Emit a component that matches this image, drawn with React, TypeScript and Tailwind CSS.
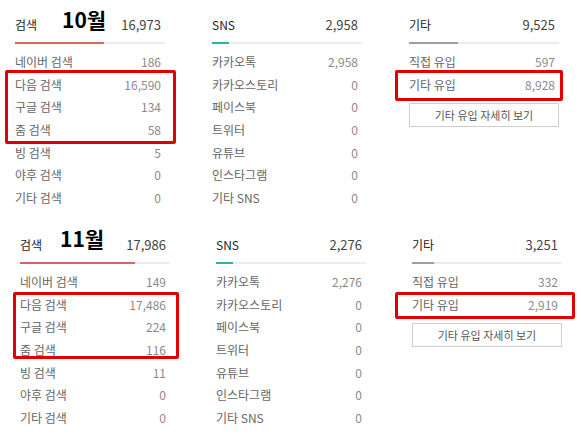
import React from "react";

type Row = [string, string];

const FONT = { fontFamily: '"Noto Sans CJK KR", "Noto Sans", sans-serif' };

function Column({
  title,
  total,
  fill,
  fillColor,
  rows,
  button,
}: {
  title: string;
  total: string;
  fill: number;
  fillColor: string;
  rows: Row[];
  button?: boolean;
}) {
  return (
    <div className="w-[150px] flex flex-col">
      <div className="h-[22px] flex items-center justify-between pr-[4px]">
        <span className="text-[12px] text-[#222]">{title}</span>
        <span className="text-[13px] text-[#444]">{total}</span>
      </div>
      <div className="mt-[6px] h-[2px] bg-[#ececec] flex">
        <div className={`h-full ${fillColor}`} style={{ width: fill }} />
      </div>
      <div className="mt-[6.7px] flex flex-col">
        {rows.map(([k, v]) => (
          <div key={k} className="h-[22.7px] flex items-center justify-between pr-[4px]">
            <span className="text-[12px] text-[#666]">{k}</span>
            <span className="text-[12px] text-[#8a8a8a]">{v}</span>
          </div>
        ))}
      </div>
      {button && (
        <div className="mt-[7px] h-[24px] border border-[#cfcfcf] flex items-center justify-center text-[11px] text-[#555]">
          기타 유입 자세히 보기
        </div>
      )}
    </div>
  );
}

function Panel({
  month,
  d,
  bottom,
}: {
  month: string;
  d: {
    search: string;
    sns: string;
    etc: string;
    s: string[];
    k: string;
    e: string[];
  };
  bottom?: boolean;
}) {
  return (
    <div
      className={`relative h-[220px] flex pt-[14px] ${
        bottom ? "pl-[20px] gap-[46px]" : "pl-[15px] gap-[47px]"
      }`}
    >
      <Column
        title="검색"
        total={d.search}
        fill={bottom ? 115 : 89}
        fillColor="bg-[#d5675f]"
        rows={[
          ["네이버 검색", d.s[0]],
          ["다음 검색", d.s[1]],
          ["구글 검색", d.s[2]],
          ["줌 검색", d.s[3]],
          ["빙 검색", d.s[4]],
          ["야후 검색", "0"],
          ["기타 검색", "0"],
        ]}
      />
      <Column
        title="SNS"
        total={d.sns}
        fill={17}
        fillColor="bg-[#2bb5a4]"
        rows={[
          ["카카오톡", d.k],
          ["카카오스토리", "0"],
          ["페이스북", "0"],
          ["트위터", "0"],
          ["유튜브", "0"],
          ["인스타그램", "0"],
          ["기타 SNS", "0"],
        ]}
      />
      <Column
        title="기타"
        total={d.etc}
        fill={bottom ? 22 : 49}
        fillColor="bg-[#9aa0a6]"
        rows={[
          ["직접 유입", d.e[0]],
          ["기타 유입", d.e[1]],
        ]}
        button
      />
      <div
        className={`absolute text-[21px] font-bold text-black leading-none ${
          bottom ? "left-[60px] top-[8px]" : "left-[62px] top-[9px]"
        }`}
        style={{ fontFamily: '"Noto Sans CJK KR", sans-serif' }}
      >
        {month}
      </div>
      {bottom ? (
        <>
          <div className="absolute left-[13px] top-[72px] w-[166px] h-[67px] border-[3px] border-[#e00000] rounded-[2px]" />
          <div className="absolute left-[395px] top-[72px] w-[180px] h-[27px] border-[3px] border-[#e00000] rounded-[2px]" />
        </>
      ) : (
        <>
          <div className="absolute left-[5px] top-[70px] w-[171px] h-[74px] border-[3px] border-[#e00000] rounded-[2px]" />
          <div className="absolute left-[395px] top-[70px] w-[168px] h-[31px] border-[3px] border-[#e00000] rounded-[2px]" />
        </>
      )}
    </div>
  );
}

export default function App() {
  return (
    <div className="w-[581px] h-[446px] bg-white overflow-hidden" style={FONT}>
      <Panel
        month="10월"
        d={{
          search: "16,973",
          sns: "2,958",
          etc: "9,525",
          s: ["186", "16,590", "134", "58", "5"],
          k: "2,958",
          e: ["597", "8,928"],
        }}
      />
      <Panel
        month="11월"
        bottom
        d={{
          search: "17,986",
          sns: "2,276",
          etc: "3,251",
          s: ["149", "17,486", "224", "116", "11"],
          k: "2,276",
          e: ["332", "2,919"],
        }}
      />
    </div>
  );
}
